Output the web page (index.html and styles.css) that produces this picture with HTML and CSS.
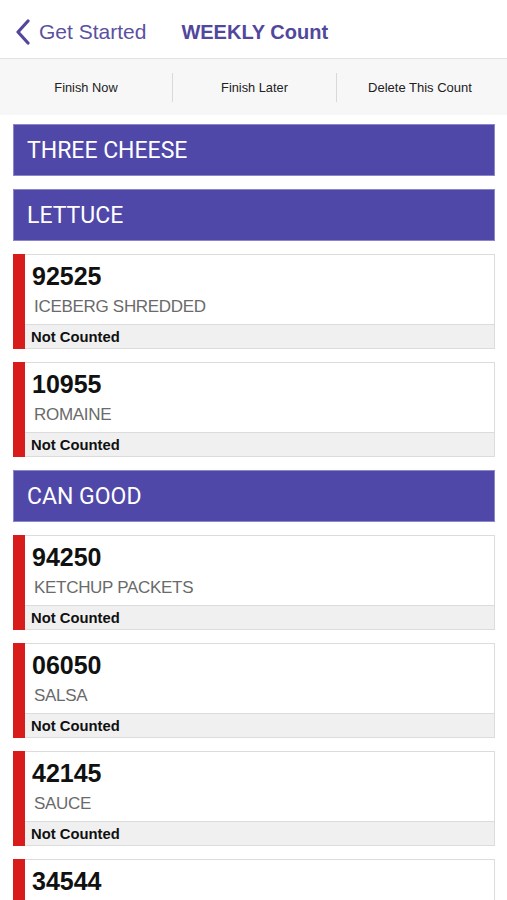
FILE: index.html
```html
<!DOCTYPE html>
<html lang="en">
<head>
    <meta charset="UTF-8">
    <meta name="viewport" content="width=device-width, initial-scale=1.0">
    <title>WEEKLY Count</title>
    <link rel="stylesheet" href="styles.css">
</head>
<body>
    <header class="nav-bar">
        <button class="back-button">
            <svg width="16" height="26" viewBox="0 0 16 26"><path d="M13 2 L3 13 L13 24" fill="none" stroke="#51479c" stroke-width="3.2" stroke-linecap="round" stroke-linejoin="round"/></svg>
            <span>Get Started</span>
        </button>
        <h1 class="nav-title">WEEKLY Count</h1>
    </header>

    <div class="toolbar">
        <button>Finish Now</button>
        <button>Finish Later</button>
        <button>Delete This Count</button>
    </div>

    <div class="count-list">
        <div class="category">THREE CHEESE</div>
        <div class="category">LETTUCE</div>

        <div class="item">
            <div class="item-body">
                <div class="item-code">92525</div>
                <div class="item-name">ICEBERG SHREDDED</div>
            </div>
            <div class="item-status">Not Counted</div>
        </div>
        <div class="item">
            <div class="item-body">
                <div class="item-code">10955</div>
                <div class="item-name">ROMAINE</div>
            </div>
            <div class="item-status">Not Counted</div>
        </div>

        <div class="category">CAN GOOD</div>

        <div class="item">
            <div class="item-body">
                <div class="item-code">94250</div>
                <div class="item-name">KETCHUP PACKETS</div>
            </div>
            <div class="item-status">Not Counted</div>
        </div>
        <div class="item">
            <div class="item-body">
                <div class="item-code">06050</div>
                <div class="item-name">SALSA</div>
            </div>
            <div class="item-status">Not Counted</div>
        </div>
        <div class="item">
            <div class="item-body">
                <div class="item-code">42145</div>
                <div class="item-name">SAUCE</div>
            </div>
            <div class="item-status">Not Counted</div>
        </div>
        <div class="item">
            <div class="item-body">
                <div class="item-code">34544</div>
            </div>
        </div>
    </div>
</body>
</html>
```

FILE: styles.css
```css
body { font-family: 'Liberation Sans', Arial, sans-serif; margin: 0; padding: 0; background: white; }
.nav-bar { display: flex; align-items: center; height: 59px; padding-top: 6px; box-sizing: border-box; border-bottom: 1px solid #e2e2e2; background: white; }
.back-button { display: flex; align-items: center; gap: 8px; background: none; border: none; padding: 0 0 0 15px; font-family: inherit; font-size: 21px; color: #5b519f; cursor: pointer; }
.nav-title { margin: 0 0 0 35px; font-size: 20px; font-weight: bold; color: #51479c; }
.toolbar { display: flex; align-items: center; height: 56px; background: #f7f7f7; }
.toolbar button { flex: 1; height: 29px; background: none; border: none; border-left: 1px solid #d9d9d9; font-family: inherit; font-size: 12.8px; color: #222; cursor: pointer; }
.toolbar button:first-child { border-left: none; flex: 0 0 172px; padding-left: 6px; }
.toolbar button:nth-child(2) { flex: 0 0 164px; }
.toolbar button:last-child { padding-right: 10px; font-size: 13px; }
.count-list { display: flex; flex-direction: column; gap: 13px; padding: 9px 12px 0 13px; }
.category { height: 52px; display: flex; align-items: center; padding-left: 13px; background: #5048a8; border: 1px solid #8c86c8; box-sizing: border-box; font-family: Roboto, 'Liberation Sans', sans-serif; font-size: 23px; color: white; }
.item { border-left: 12px solid #d81c1c; }
.item-body { height: 70px; padding: 6px 0 0 7px; box-sizing: border-box; border: 1px solid #dcdcdc; border-left: none; border-bottom: none; }
.item-code { font-size: 25px; font-weight: bold; color: #111; line-height: 30px; }
.item-name { font-size: 17px; letter-spacing: -0.3px; color: #6a6a6a; line-height: 24px; margin-top: 4px; padding-left: 2px; }
.item-status { height: 25px; box-sizing: border-box; display: flex; align-items: center; padding-left: 6px; background: #f0f0f0; border: 1px solid #dcdcdc; border-left: none; font-size: 14.8px; font-weight: bold; color: #111; }
```
